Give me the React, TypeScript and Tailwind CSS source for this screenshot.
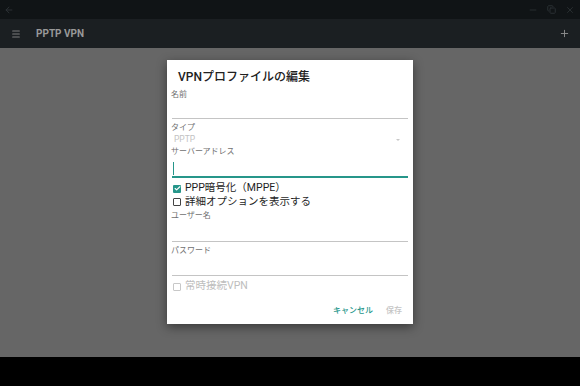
import { Menu, Plus, ArrowLeft, Minus, X, Copy, Check } from "lucide-react";

const font = "font-['Roboto','Noto_Sans_CJK_JP',sans-serif]";

function Label({ text, className = "" }: { text: string; className?: string }) {
  return (
    <div className={`flex items-center pl-[4px] text-[8px] leading-none text-[#707070] ${className}`}>
      {text}
    </div>
  );
}

function Field({ className = "" }: { className?: string }) {
  return <div className={`mx-[5px] border-b border-[#c4c4c4] ${className}`} />;
}

function CheckRow({
  text,
  checked,
  disabled,
  className = "",
}: {
  text: string;
  checked?: boolean;
  disabled?: boolean;
  className?: string;
}) {
  return (
    <div className={`flex items-center gap-[4px] pl-[6px] ${className}`}>
      {checked ? (
        <div className="flex h-[8px] w-[8px] items-center justify-center rounded-[1px] bg-[#26968a]">
          <Check className="h-[7px] w-[7px] text-white" strokeWidth={4} />
        </div>
      ) : (
        <div
          className={`h-[8px] w-[8px] rounded-[1px] border ${
            disabled ? "border-[#c8c8c8]" : "border-[#444]"
          }`}
        />
      )}
      <span
        className={`text-[10.5px] leading-none ${disabled ? "text-[#bdbdbd]" : "text-[#1e1e1e]"}`}
      >
        {text}
      </span>
    </div>
  );
}

export default function App() {
  return (
    <div className={`flex h-[386px] w-[580px] flex-col overflow-hidden bg-black ${font}`}>
      {/* Window bar */}
      <div className="flex h-[19px] items-center bg-[#101416] pl-[4px] pr-[5px]">
        <ArrowLeft className="h-[10px] w-[10px] text-[#30363a]" strokeWidth={2} />
        <div className="flex-1" />
        <div className="flex items-center gap-[9px]">
          <Minus className="h-[10px] w-[10px] text-[#2c3235]" strokeWidth={2} />
          <Copy className="h-[9px] w-[9px] text-[#2c3235]" strokeWidth={2.5} />
          <X className="h-[10px] w-[10px] text-[#2c3235]" strokeWidth={2} />
        </div>
      </div>

      {/* App bar */}
      <div className="flex h-[29px] items-center bg-[#1b1f22] pl-[11px] pr-[10px]">
        <Menu className="h-[10px] w-[10px] text-[#7c7c7c]" strokeWidth={2.5} />
        <span className="ml-[15px] text-[10px] font-bold text-[#999]">PPTP VPN</span>
        <div className="flex-1" />
        <Plus className="h-[11px] w-[11px] text-[#8f8f8f]" strokeWidth={2} />
      </div>

      {/* Content */}
      <div className="flex h-[309px] justify-center bg-[#666666] pt-[12px]">
        <div className="flex h-[264px] w-[246px] flex-col bg-white shadow-[0_3px_10px_rgba(0,0,0,0.45)]">
          <div className="mt-[7px] flex h-[20px] items-center pl-[11px] text-[12px] font-medium text-[#212121]">
            VPNプロファイルの編集
          </div>

          <Label text="名前" className="mt-[3px] h-[10px]" />
          <Field className="h-[19px]" />

          <Label text="タイプ" className="mt-[3px] h-[11px]" />
          <div className="mt-[1px] flex h-[11px] items-center justify-between pl-[7px] pr-[13px]">
            <span className="text-[8.5px] leading-none text-[#c2c2c2]">PPTP</span>
            <div className="h-0 w-0 border-x-[2px] border-t-[2px] border-x-transparent border-t-[#c8c8c8]" />
          </div>

          <Label text="サーバーアドレス" className="mt-[2px] h-[10px]" />
          <div className="mx-[5px] h-[21px] border-b-2 border-[#26968a] pl-[1px] pt-[5px]">
            <div className="h-[13px] w-[1px] bg-[#26968a]" />
          </div>

          <CheckRow text="PPP暗号化（MPPE）" checked className="mt-[4px] h-[13px]" />
          <CheckRow text="詳細オプションを表示する" className="h-[14px]" />

          <Label text="ユーザー名" className="mt-[2px] h-[10px]" />
          <Field className="h-[21px]" />

          <Label text="パスワード" className="mt-[3px] h-[11px]" />
          <Field className="h-[20px]" />

          <CheckRow text="常時接続VPN" disabled className="mt-[4px] h-[13px]" />

          <div className="mt-[11px] flex h-[14px] items-center justify-end gap-[13px] pr-[11px] text-[8px] font-medium leading-none">
            <span className="text-[#26968a]">キャンセル</span>
            <span className="text-[#c4c4c4]">保存</span>
          </div>
        </div>
      </div>
    </div>
  );
}
